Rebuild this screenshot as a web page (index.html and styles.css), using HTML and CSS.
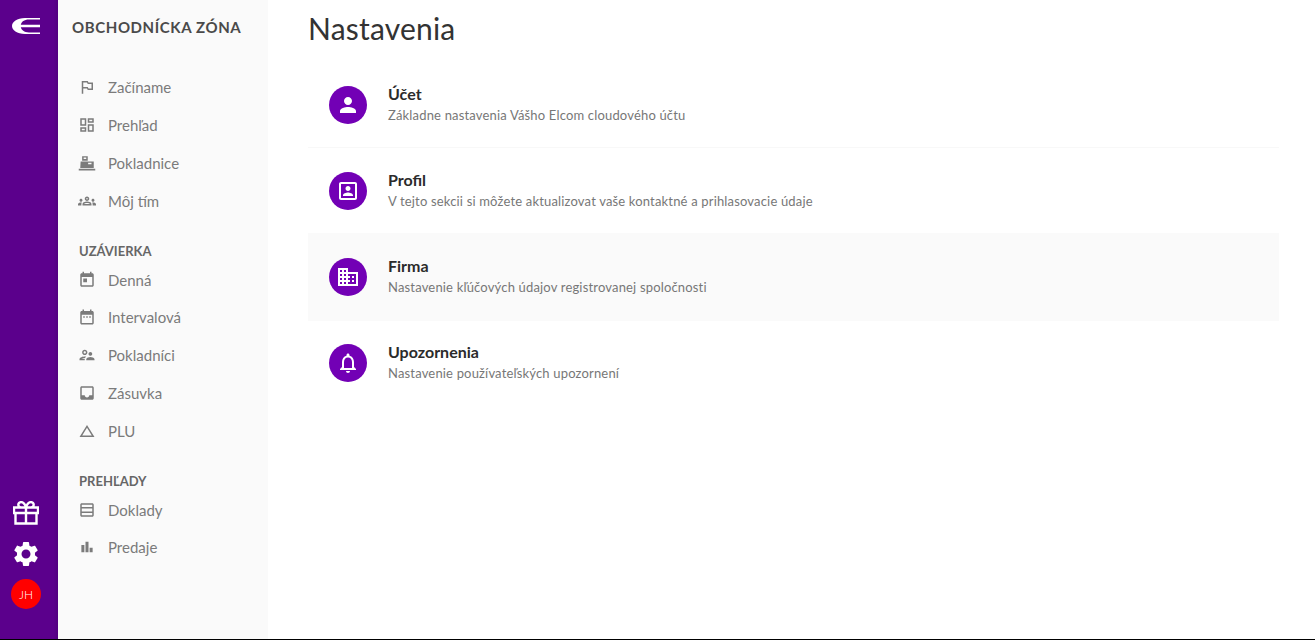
FILE: index.html
```html
<!DOCTYPE html>
<html lang="sk">
<head>
<meta charset="utf-8">
<title>Nastavenia</title>
<link rel="stylesheet" href="styles.css">
</head>
<body>
<div class="app">
  <nav class="rail">
    <svg class="logo" viewBox="0 0 28 16"><path d="M28 1.500V0H13C5 0 0 4 0 8s5 8 13 8h15v-1.500H17C12 14.500 9.500 12 8.800 9.300H28V6.700H8.800C9.500 4 12 1.500 17 1.500z"/></svg>
    <div class="rail-bottom">
      <svg class="gift" viewBox="0 0 26 24"><path d="M2.500 12v10.500h21V12M1 6.500h24V12H1zM13 6.500v16M13 6.500H8a2.700 2.700 0 1 1 0-5.400c3.500 0 5 5.400 5 5.400zM13 6.500h5a2.700 2.700 0 1 0 0-5.400c-3.500 0-5 5.400-5 5.400z"/></svg>
      <svg class="gear" viewBox="0 0 24 24"><path d="M19.140 12.940c.04-.3.06-.61.06-.94 0-.32-.02-.64-.07-.94l2.030-1.580c.18-.14.23-.41.12-.61l-1.920-3.320c-.12-.22-.37-.29-.59-.22l-2.390.96c-.5-.38-1.030-.7-1.620-.94l-.36-2.540c-.04-.24-.24-.41-.48-.41h-3.840c-.24 0-.43.17-.47.41l-.36 2.540c-.59.24-1.130.57-1.620.94l-2.390-.96c-.22-.08-.47 0-.59.22L2.740 8.870c-.12.21-.08.47.12.61l2.030 1.580c-.05.3-.09.63-.09.94s.02.64.07.94l-2.030 1.580c-.18.14-.23.41-.12.61l1.920 3.320c.12.22.37.29.59.22l2.390-.96c.5.38 1.030.7 1.620.94l.36 2.540c.05.24.24.41.48.41h3.840c.24 0 .44-.17.47-.41l.36-2.540c.59-.24 1.130-.56 1.620-.94l2.390.96c.22.08.47 0 .59-.22l1.920-3.320c.12-.22.07-.47-.12-.61l-2.010-1.580zM12 15.600c-1.980 0-3.600-1.620-3.600-3.600s1.620-3.600 3.600-3.600 3.600 1.620 3.600 3.600-1.620 3.600-3.600 3.600z"/></svg>
      <div class="avatar">JH</div>
    </div>
  </nav>

  <aside class="side">
    <div class="brand">OBCHODNÍCKA ZÓNA</div>
    <ul class="group">
      <li class="item"><svg viewBox="0 0 24 24"><path d="M14 6l-1-2H5v17h2v-7h5l1 2h7V6h-6zm4 8h-4l-1-2H7V6h5l1 2h5v6z"/></svg><span>Začíname</span></li>
      <li class="item"><svg viewBox="0 0 24 24"><path d="M19 5v2h-4V5h4M9 5v6H5V5h4m10 8v6h-4v-6h4M9 17v2H5v-2h4M21 3h-8v6h8V3zM11 3H3v10h8V3zm10 8h-8v10h8V11zm-10 4H3v6h8v-6z"/></svg><span>Prehľad</span></li>
      <li class="item"><svg viewBox="0 0 24 24"><path d="M1 19.500h22V22H1zM3.500 10H21v8.500H3zM5.500 3H13v6H5.500zM7.500 4.500v2H11v-2zM13.500 11.500v2H18v-2z" fill-rule="evenodd"/></svg><span>Pokladnice</span></li>
      <li class="item"><svg viewBox="0 0 24 24"><path d="M4 13c1.100 0 2-.9 2-2s-.9-2-2-2-2 .9-2 2 .9 2 2 2zm1.130 1.100c-.37-.06-.74-.1-1.130-.1-.99 0-1.930.21-2.780.58C.48 14.900 0 15.620 0 16.430V18h4.500v-1.610c0-.83.23-1.610.63-2.290zM20 13c1.100 0 2-.9 2-2s-.9-2-2-2-2 .9-2 2 .9 2 2 2zm4 3.430c0-.81-.48-1.530-1.220-1.850-.85-.37-1.790-.58-2.780-.58-.39 0-.76.04-1.130.1.4.68.63 1.460.63 2.290V18H24v-1.570zM16.240 13.650c-1.170-.52-2.610-.9-4.240-.9s-3.070.39-4.240.9C6.680 14.130 6 15.210 6 16.390V18h12v-1.610c0-1.180-.68-2.260-1.760-2.740zM8.070 16c.09-.23.13-.39.91-.69.97-.38 1.990-.56 3.020-.56s2.050.18 3.020.56c.77.3.81.46.91.69H8.070zM12 8c.55 0 1 .45 1 1s-.45 1-1 1-1-.45-1-1 .45-1 1-1m0-2c-1.660 0-3 1.340-3 3s1.340 3 3 3 3-1.340 3-3-1.340-3-3-3z"/></svg><span>Môj tím</span></li>
    </ul>
    <h2 class="label">UZÁVIERKA</h2>
    <ul class="group">
      <li class="item item-first"><svg viewBox="0 0 24 24"><path d="M19 3h-1V1h-2v2H8V1H6v2H5c-1.110 0-1.990.9-1.990 2L3 19c0 1.100.89 2 2 2h14c1.100 0 2-.9 2-2V5c0-1.100-.9-2-2-2zm0 16H5V8h14v11zM7 10h5v5H7z"/></svg><span>Denná</span></li>
      <li class="item"><svg viewBox="0 0 24 24"><path d="M9 11H7v2h2v-2zm4 0h-2v2h2v-2zm4 0h-2v2h2v-2zm2-7h-1V2h-2v2H8V2H6v2H5c-1.110 0-1.990.9-1.990 2L3 20c0 1.100.89 2 2 2h14c1.100 0 2-.9 2-2V6c0-1.100-.9-2-2-2zm0 16H5V9h14v11z"/></svg><span>Intervalová</span></li>
      <li class="item"><svg viewBox="0 0 24 24"><path d="M9 12c1.930 0 3.500-1.570 3.500-3.500S10.930 5 9 5 5.500 6.570 5.500 8.500 7.070 12 9 12zm0-5c.83 0 1.500.67 1.500 1.500S9.830 10 9 10s-1.500-.67-1.500-1.500S8.170 7 9 7zm.05 10H4.770c.99-.5 2.700-1 4.230-1 .11 0 .23.01.34.01.34-.73.93-1.330 1.640-1.810-.73-.13-1.420-.2-1.980-.2-2.340 0-7 1.170-7 3.500V19h7v-1.500c0-.17.02-.34.05-.5zm7.450-2.500c-1.840 0-5.500 1.010-5.500 3V19h11v-1.500c0-1.990-3.660-3-5.500-3zm1.210-1.820c.76-.43 1.290-1.240 1.290-2.180C19 9.120 17.880 8 16.500 8S14 9.120 14 10.500c0 .94.53 1.750 1.290 2.180.36.2.77.32 1.210.32s.85-.12 1.210-.32z"/></svg><span>Pokladníci</span></li>
      <li class="item"><svg viewBox="0 0 24 24"><path d="M19 3H4.990c-1.110 0-1.980.89-1.980 2L3 19c0 1.100.88 2 1.990 2H19c1.100 0 2-.9 2-2V5c0-1.110-.9-2-2-2zm0 12h-4c0 1.660-1.350 3-3 3s-3-1.340-3-3H4.990V5H19v10z"/></svg><span>Zásuvka</span></li>
      <li class="item"><svg viewBox="0 0 24 24"><path d="M12 7.770L18.390 18H5.610L12 7.770M12 4L2 20h20L12 4z"/></svg><span>PLU</span></li>
    </ul>
    <h2 class="label">PREHĽADY</h2>
    <ul class="group">
      <li class="item item-first"><svg viewBox="0 0 24 24"><path d="M19 3H5c-1.100 0-2 .9-2 2v14c0 1.100.9 2 2 2h14c1.100 0 2-.9 2-2V5c0-1.100-.9-2-2-2zm0 2v3H5V5h14zm0 5v4H5v-4h14zM5 19v-3h14v3H5z"/></svg><span>Doklady</span></li>
      <li class="item"><svg viewBox="0 0 24 24"><path d="M4.500 9.200h4V19h-4zM10 5h4v14h-4zm5.500 8h4v6h-4z"/></svg><span>Predaje</span></li>
    </ul>
  </aside>

  <main class="main">
    <h1 class="title">Nastavenia</h1>
    <div class="rows">
      <div class="row">
        <div class="badge"><svg viewBox="0 0 24 24"><path d="M12 12c2.210 0 4-1.790 4-4s-1.790-4-4-4-4 1.790-4 4 1.790 4 4 4zm0 2c-2.670 0-8 1.340-8 4v2h16v-2c0-2.660-5.330-4-8-4z"/></svg></div>
        <div class="copy"><div class="row-title">Účet</div><div class="row-sub">Základne nastavenia Vášho Elcom cloudového účtu</div></div>
      </div>
      <div class="row row-line">
        <div class="badge"><svg viewBox="0 0 24 24"><path d="M19 3H5c-1.100 0-2 .9-2 2v14c0 1.100.9 2 2 2h14c1.100 0 2-.9 2-2V5c0-1.100-.9-2-2-2zm0 16H5V5h14v14zM12 12c1.380 0 2.500-1.120 2.500-2.500S13.380 7 12 7 9.500 8.120 9.500 9.500 10.620 12 12 12zM17 16.300c0-1.900-3.300-2.800-5-2.800s-5 .9-5 2.800V17h10v-.7z" fill-rule="evenodd"/></svg></div>
        <div class="copy"><div class="row-title">Profil</div><div class="row-sub">V tejto sekcii si môžete aktualizovat vaše kontaktné a prihlasovacie údaje</div></div>
      </div>
      <div class="row row-active">
        <div class="badge"><svg viewBox="0 0 24 24"><path d="M12 7V3H2v18h20V7H12zM6 19H4v-2h2v2zm0-4H4v-2h2v2zm0-4H4V9h2v2zm0-4H4V5h2v2zm4 12H8v-2h2v2zm0-4H8v-2h2v2zm0-4H8V9h2v2zm0-4H8V5h2v2zm10 12h-8v-2h2v-2h-2v-2h2v-2h-2V9h8v10zm-2-8h-2v2h2v-2zm0 4h-2v2h2v-2z"/></svg></div>
        <div class="copy"><div class="row-title">Firma</div><div class="row-sub">Nastavenie kľúčových údajov registrovanej spoločnosti</div></div>
      </div>
      <div class="row">
        <div class="badge"><svg viewBox="0 0 24 24"><path d="M12 22c1.100 0 2-.9 2-2h-4c0 1.100.9 2 2 2zm6-6v-5c0-3.070-1.630-5.640-4.500-6.320V4c0-.83-.67-1.500-1.500-1.500s-1.500.67-1.500 1.500v.68C7.640 5.360 6 7.920 6 11v5l-2 2v1h16v-1l-2-2zm-2 1H8v-6c0-2.480 1.510-4.500 4-4.500s4 2.020 4 4.500v6z"/></svg></div>
        <div class="copy"><div class="row-title">Upozornenia</div><div class="row-sub">Nastavenie používateľských upozornení</div></div>
      </div>
    </div>
  </main>
</div>
</body>
</html>
```

FILE: styles.css
```css
* { box-sizing: border-box; }
html, body { margin: 0; height: 100%; }
body { font-family: "Lato", "Noto Sans", sans-serif; background: #fff; overflow: hidden; }
ul { list-style: none; margin: 0; padding: 0; }

.app { display: flex; height: 640px; border-bottom: 1px solid #000; }

.rail {
  width: 58px; flex: none; display: flex; flex-direction: column; align-items: center;
  background: linear-gradient(90deg, #5b008c 0, #5b008c 92%, #520080 100%);
  padding-top: 18px; padding-bottom: 30px;
}
.logo { width: 28px; height: 16px; fill: #fff; margin-left: -6px; }
.rail-bottom { margin-top: auto; display: flex; flex-direction: column; align-items: center; }
.gift { width: 26px; height: 24px; fill: none; stroke: #fff; stroke-width: 2.400; margin-left: -6px; }
.gear { width: 30px; height: 30px; fill: #fff; margin-top: 14px; margin-left: -6px; }
.avatar {
  width: 30px; height: 30px; margin-top: 10px; margin-left: -6px; border-radius: 50%; background: #f00; color: #fff;
  font-size: 12px; font-weight: 300; display: flex; align-items: center; justify-content: center;
}

.side { width: 210px; flex: none; background: #fafafa; padding: 18px 0 0 14px; }
.brand { font-size: 15px; font-weight: 700; line-height: 18px; color: #4a4a4a; letter-spacing: .6px; margin-bottom: 32px; }
.group { display: flex; flex-direction: column; padding-left: 6px; }
.item { height: 38px; display: flex; align-items: center; gap: 12px; font-size: 15px; color: #7b7b7b; }
.item-first { height: 37px; }
.item svg { width: 18px; height: 18px; fill: #7b7b7b; flex: none; }
.label { margin: 22px 0 1px 7px; font-size: 13px; line-height: 18px; font-weight: 700; color: #666; height: 18px; }

.main { flex: 1; padding: 0 36px 0 40px; min-width: 0; }
.title { margin: 0; font-size: 30px; font-weight: 400; line-height: 34px; height: 61px; padding-top: 11px; color: #333; letter-spacing: .2px; }
.rows { display: flex; flex-direction: column; }
.row { height: 88px; display: flex; align-items: center; padding-left: 21px; gap: 21px; }
.row + .row { margin-top: -2px; }
.row-line { box-shadow: inset 0 1px 0 #f8f8f8; }
.row-active { background: #fafafa; }
.badge { width: 38px; height: 38px; border-radius: 50%; background: #7200b5; display: flex; align-items: center; justify-content: center; flex: none; }
.badge svg { width: 24px; height: 24px; fill: #fff; }
.copy { display: flex; flex-direction: column; gap: 1px; padding-bottom: 2px; }
.row-title { font-size: 16px; line-height: 20px; font-weight: 700; color: #2b2b2b; }
.row-sub { font-size: 13px; line-height: 20px; color: #777; letter-spacing: .17px; }
```
